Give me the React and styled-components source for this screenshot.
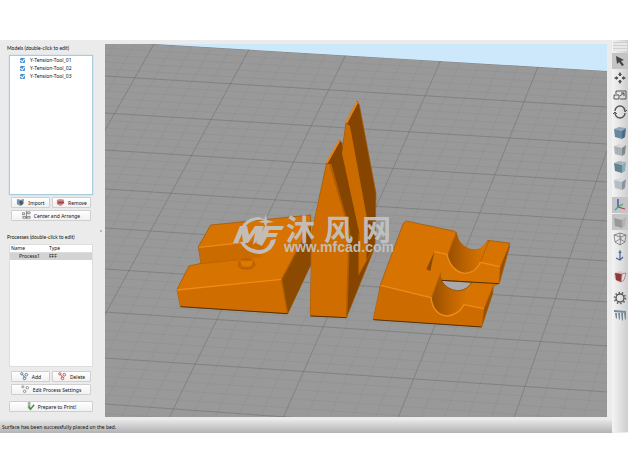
import React from "react";
import styled, { createGlobalStyle } from "styled-components";

const Global = createGlobalStyle`
  * { box-sizing: border-box; }
  body { margin: 0; background: #fff; color: #111; font: 5px/8px "Noto Sans", "Open Sans", sans-serif; }
`;

const Page = styled.main`padding: 40px 0 39px;`;
const Window = styled.div`
  display: grid;
  grid-template-columns: 105px minmax(0, 1fr) 21px;
  grid-template-rows: auto 13px;
  background: #ebebeb;
`;
const Sidebar = styled.aside`
  display: flex;
  flex-direction: column;
  padding: 4px 12px 8px 9px;
  position: relative;
  &::after {
    content: "";
    position: absolute;
    right: 3px;
    top: 190px;
    width: 2px;
    height: 2px;
    border-radius: 50%;
    background: #aaa;
  }
`;
const Heading = styled.h2`
  margin: 0 0 ${(p) => p.$gap}px -2px;
  font: 5px/8px Lato, "Liberation Sans", sans-serif;
  color: #111;
  white-space: nowrap;
`;
const Group = styled.section`
  display: flex;
  flex-direction: column;
  margin-bottom: ${(p) => p.$after}px;
`;
const List = styled.div`
  height: 140px;
  border: 1px solid #a9cbe0;
  background: #fff;
  box-shadow: 0 0 1px #9ec9e4;
`;
const ModelRow = styled.label`
  display: flex;
  align-items: center;
  height: 8px;
  padding-left: 10px;
  gap: 5px;
  line-height: 8px;
`;
const Tick = styled.input`
  appearance: none;
  width: 5px;
  height: 5px;
  margin: 0;
  border-radius: 1px;
  background: #4a90d2;
  display: grid;
  place-items: center;
  &:checked::after {
    content: "";
    width: 2px;
    height: 3px;
    border: solid #fff;
    border-width: 0 1px 1px 0;
    transform: rotate(40deg);
  }
`;
const ButtonGrid = styled.div`
  display: grid;
  grid-template-columns: 1fr 1fr;
  gap: 2px;
  padding: ${(p) => p.$top}px 2px 0;
`;
const Button = styled.button`
  grid-column: ${(p) => (p.$wide ? "1 / -1" : "auto")};
  display: flex;
  align-items: center;
  justify-content: center;
  gap: 3px;
  height: 11px;
  padding: 0;
  border: 1px solid #cfcfcf;
  border-radius: 1px;
  background: linear-gradient(#fff, #f1f1f1);
  color: #111;
  font: inherit;
  white-space: nowrap;
  svg { width: 9px; height: 9px; flex: none; }
`;
const ProcessPane = styled.div`height: 123px; background: #fff; border: 1px solid #ddd;`;
const Table = styled.table`
  width: 100%;
  border-collapse: collapse;
  table-layout: fixed;
  line-height: 7px;
  th, td { padding: 0 0 0 1px; height: 7px; text-align: left; font-weight: 400; }
  th { border-bottom: 1px solid #ddd; }
  th:first-child { width: 38px; }
  tbody tr { background: #d3d3d3; }
  tbody td:first-child { padding-left: 9px; }
`;
const Viewport = styled.section`
  position: relative;
  margin: 4px 0 3px;
  background: #cde8fb;
  overflow: hidden;
`;
const Scene = styled.svg`
  position: absolute;
  inset: 0;
  width: 100%;
  height: 100%;
`;
const Status = styled.footer`
  grid-column: 1 / 3;
  grid-row: 2;
  padding: 0 2px;
  line-height: 14px;
  background: linear-gradient(#e6e6e6, #b2b2b2);
  margin-right: -5px;
`;
const Toolbar = styled.nav`
  grid-column: 3;
  grid-row: 1 / 3;
  position: relative;
  margin: 0 0 1px 5px;
  display: flex;
  flex-direction: column;
  background: linear-gradient(90deg, #f4f4f4, #dcdcdc 65%, #cecece);
`;
const Grip = styled.div`
  height: 9px;
  margin: 2px 1px 2px;
  background: repeating-linear-gradient(#d0d0d0 0 1px, #e8e8e8 1px 3px);
`;
const ToolGroup = styled.div`
  display: flex;
  flex-direction: column;
  gap: 1px;
  padding-bottom: ${(p) => p.$after}px;
`;
const Tool = styled.button`
  display: grid;
  place-items: center;
  height: 16px;
  padding: 0;
  border: 0;
  background: ${(p) => (p.$on ? "#c4c4c6" : "transparent")};
  svg { width: 14px; height: 14px; }
`;

/* Bed grid: x of each main line at the far and near edge, y at the left and right edge */
const COLS = [[57, -160], [154, -58], [252, 49], [351, 169], [448, 283], [547, 398], [644, 514], [740, 629], [836, 743]];
const ROWS = [[41, 71], [76, 107], [113, 144], [150, 182], [189, 221], [228, 261], [269, 302], [312, 346], [358, 392], [404, 440], [452, 490]];
const SUBS = [0, 1, 2, 3, 4];
const subdivide = (lines) =>
  lines.slice(0, -1).flatMap((a, i) =>
    SUBS.map((k) => ({ main: k === 0, a: a[0] + ((lines[i + 1][0] - a[0]) * k) / 5, b: a[1] + ((lines[i + 1][1] - a[1]) * k) / 5 }))
  );

function Bed() {
  const stroke = (m) => ({ stroke: m ? "#686a6c" : "#858789", strokeWidth: m ? 0.6 : 0.5, opacity: m ? 0.8 : 0.5 });
  return (
    <g clipPath="url(#bed)">
      <path d="M105 41 607 71V418H105z" fill="#999" />
      {subdivide(COLS).map((l, i) => <line key={"c" + i} x1={l.a} y1="44" x2={l.b} y2="418" {...stroke(l.main)} />)}
      {subdivide(ROWS).map((l, i) => <line key={"r" + i} x1="105" y1={l.a} x2="607" y2={l.b} {...stroke(l.main)} />)}
    </g>
  );
}

function LeftWedge() {
  return (
    <g transform="translate(165 200) scale(.33333)" strokeLinejoin="round">
      <path d="M36 268 72 198 108 190 100 140 137 75 437 45V195L368 341 46 319z" fill="#d77300" stroke="#9b5300" strokeWidth="2" />
      <path d="M102 142 300 120 290 172 108 192z" fill="#ca6b00" />
      <path d="M350 238 437 75V195L368 341z" fill="#8c4900" />
      <path d="M36 270 350 238 368 341 46 319z" fill="#cf6d00" />
      <path d="M36 270 350 238M102 142 240 127" stroke="#f08a12" strokeWidth="4" fill="none" />
      <path d="M350 238 437 75M350 238l18 103" stroke="#ae5c00" strokeWidth="4" fill="none" />
      <path d="M46 320 368 341" stroke="#523000" strokeWidth="3" />
      <path d="M108 191 220 180" stroke="#b96100" strokeWidth="2" />
      <path d="M222 190q0-14 22-13 24 0 23 11l3 7q-5 12-24 12-23 0-26-10z" fill="#c36700" stroke="#a45500" strokeWidth="2" />
      <path d="M226 180q18 8 38 0l-5 17q-15 6-28 0z" fill="#df7900" />
    </g>
  );
}

function Towers() {
  return (
    <g transform="translate(300 90) scale(.33333)" strokeLinejoin="round">
      <path d="M31 677 35 430 80 218 118 151 126 158 128 170 138 98 172 33 178 45 228 310 225 470 140 682z" fill="#854500" stroke="#a75800" strokeWidth="2" />
      <path d="M138 100 150 108 202 390 199 515 176 554 178 430 126 190z" fill="#ca6b00" />
      <path d="M31 677 35 430 80 222 94 222 148 420 140 682z" fill="#cf6d00" />
      <path d="M90 222 148 420 140 680" stroke="#af5b00" strokeWidth="5" fill="none" />
      <path d="M80 219 118 152M139 99 172 36" stroke="#e58516" strokeWidth="6" />
      <path d="M176 554V430M176 554 222 472" stroke="#ad5b00" strokeWidth="3" fill="none" />
      <path d="M31 678 140 683" stroke="#523000" strokeWidth="3" />
    </g>
  );
}

function Cradle() {
  return (
    <g transform="translate(365 210) scale(.33333)" strokeLinejoin="round">
      <path d="M25 328 47 222 115 40 124 33 270 64 280 94Q305 122 334 120 356 116 368 91L433 99 433 112 403 220 385 227 383 250 350 350z" fill="#d77300" stroke="#9b5300" strokeWidth="2" />
      <path d="M25 328 47 226 198 263 202 290Q215 317 246 318 278 316 297 284L357 296 350 350z" fill="#cc6b00" />
      <path d="M275 67Q284 118 334 120 358 112 368 91 368 125 346 157 333 190 300 190 267 182 248 145 253 110 275 67z" fill="url(#bore)" />
      <path d="M226 192 231 212Q245 242 278 242 303 240 320 219 312 245 297 284 278 317 246 318 208 312 200 267z" fill="url(#bore)" />
      <path d="M229 211 320 217Q306 242 278 242 244 239 229 211z" fill="#aaa" stroke="#754000" strokeWidth="2" />
      <path d="M208 125 196 183 184 178z" fill="#8c4900" />
      <path d="M357 296 383 230V250L350 350z" fill="#9b5100" />
      <path d="M405 172 433 104V112L402 220z" fill="#9b5100" />
      <path d="M47 226 198 263Q204 314 246 318 280 316 297 284L357 296M208 125 246 133Q258 186 300 190 334 188 346 157L405 170" stroke="#ef8b18" strokeWidth="4" fill="none" />
      <path d="M275 67 250 130M228 188 200 261M372 91 347 155" stroke="#b55f00" strokeWidth="3" />
      <path d="M25 329 350 351M230 211 402 221" stroke="#523000" strokeWidth="3" />
    </g>
  );
}

function Watermark() {
  return (
    <g fill="#c3c3c3" opacity=".93">
      <path d="M240 229Q246 217 259 217L267 220Q249 218 244 229zM240 242Q246 254 261 254 274 251 276 239L271 240Q268 250 259 250 248 249 244 242z" />
      <path d="M266 214 267 220 274 222 267 223 266 229 264 223 258 222 264 220z" />
      <path d="M233 243 240 226H247L249 235 255 226H264L260 237 258 240 253 245 255 233 248 243H243L242 234 238 243z" />
      <path d="M265 226H284L282 230H269L268 233H278L276 237H267L262 246 256 243z" />
      <g fontFamily='"Noto Sans CJK SC", sans-serif' fontSize="29" fontWeight="700">
        <text x="286" y="241">沐</text>
        <text x="324" y="241">风</text>
        <text x="362" y="241">网</text>
      </g>
      <text x="284" y="252" fontFamily='"Liberation Sans", Arial, sans-serif' fontSize="14" fontWeight="700">www.mfcad.com</text>
    </g>
  );
}

const cubes = {
  blue: ["#91a9ba", "#6688a0", "#4c6d86"],
  grey: ["#d5d9db", "#a9b0b4", "#7f8a90"],
  teal: ["#a2b6c0", "#638394", "#8baab8"],
  pale: ["#d5dadd", "#b5bdc3", "#8895a0"],
  solid: ["#c4c4c4", "#999", "#b2b2b2"],
};
const Cube = ({ tone }) => {
  const [t, l, r] = cubes[tone];
  return <g><path d="M1 3 6 1 13 2 9 5z" fill={t} /><path d="M1 3 9 5V13L2 11z" fill={l} /><path d="M9 5 13 2 12 11 9 13z" fill={r} /></g>;
};
const ink = { fill: "none", stroke: "#555", strokeWidth: 1 };
const DRAWINGS = {
  pointer: <path d="M3 2 11 6 8 7 11 11 9 12 6 8 4 10z" fill="#444" />,
  move: <g fill="#555"><path d="M7 1 9 4H5zM7 13 5 10H9zM1 7 4 5V9zM13 7 10 9V5z" /><path d="M6 4H8V5H6zM6 9H8V10H6zM4 6H5V8H4zM9 6H10V8H9z" /></g>,
  scale: <g {...ink}><path d="M3 6V3H13V11H7M1 7H6V11H1zM7 8 11 5M8 5H11V8" /></g>,
  rotate: <g {...ink}><path d="M2 6A5 5 0 0 1 12 6M12 8A5 5 0 0 1 2 8" strokeWidth="1.4" /><path d="M11 4 12 7 14 5M0 9 2 7 4 9" /></g>,
  axes: <g fill="none" strokeWidth="1.3"><path d="M5 9V1" stroke="#3447ae" /><path d="M5 9 12 11" stroke="#b54238" /><path d="M5 9 10 6" stroke="#45a66a" /><path d="M5 9 2 12" stroke="#3aa4a4" /></g>,
  wire: <g {...ink} stroke="#777" strokeWidth=".8"><path d="M1 3 7 1 13 3 12 10 7 13 2 10zM1 3 8 5 13 3M8 5 7 13M2 10 7 7 12 10M7 1V7" /></g>,
  normal: <g fill="none" stroke="#4c63a0" strokeWidth="1.2"><path d="M7 11V2M6 4 7 2 8 4M3 9 7 11 10 8" /></g>,
  section: <g><path d="M1 3 7 1 13 3 11 11 7 13 2 10z" fill="#d9c9c9" /><path d="M2 3 9 4 8 12 3 10z" fill="#8f3a3a" /><path d="M9 4 13 3 11 10 8 12z" fill="#ddd" stroke="#9c5c5c" strokeWidth=".6" /></g>,
  gear: <g fill="none" stroke="#555"><circle cx="7" cy="7" r="4" strokeWidth="1.4" /><circle cx="7" cy="7" r="5.5" strokeWidth="1.5" strokeDasharray="1.4 2" /></g>,
  supports: <g fill="#738b9c"><path d="M1 2 13 3V5L1 4z" /><path d="M2 5H4V10L3 11zM5 5H7V11L6 12zM8 5H10V12L9 13zM11 5H13V11L12 12z" /></g>,
};

function ToolIcon({ name }) {
  return <svg viewBox="0 0 14 14" aria-hidden="true">{DRAWINGS[name] || <Cube tone={name} />}</svg>;
}

const TOOL_GROUPS = [
  { after: 5, tools: [["Select", "pointer", true], ["Move", "move"], ["Scale", "scale"], ["Rotate", "rotate"]] },
  { after: 5, tools: [["Default view", "blue"], ["Top view", "grey"], ["Front view", "teal"], ["Side view", "pale"]] },
  { after: 5, tools: [["Axes", "axes", true], ["Solid", "solid", true], ["Wireframe", "wire"], ["Normals", "normal"]] },
  { after: 5, tools: [["Cross section", "section"]] },
  { after: 0, tools: [["Machine control", "gear"], ["Supports", "supports"]] },
];

const SMALL = {
  import: <g><path d="M1 1 5 2 9 1 8 7 5 9 1 7z" fill="#8795a2" /><path d="M4 3H7V5H9L6 8 3 5H4z" fill="#405a76" /></g>,
  remove: <g><path d="M1 2 5 1 9 2 8 7 5 9 1 7z" fill="#c58a8a" /><path d="M2 4H9V6H2z" fill="#a73b43" /></g>,
  arrange: <g fill="none" stroke="#666" strokeWidth=".8"><path d="M0 2H3V4H0zM6 1H9V3H6zM1 6H4V8H1zM6 6H9V8H6zM5 0V9" /></g>,
  add: <g fill="none" stroke="#54718e"><circle cx="2" cy="2" r="1.3" /><circle cx="7" cy="3" r="1.5" /><circle cx="5" cy="7" r="1.5" /><path d="M3 3 5 6" /></g>,
  delete: <g fill="none" stroke="#b64c50"><circle cx="2" cy="2" r="1.3" /><circle cx="7" cy="3" r="1.5" /><circle cx="5" cy="7" r="1.5" /><path d="M3 3 5 6" /></g>,
  edit: <g fill="none" stroke="#888"><circle cx="2" cy="2" r="1.2" /><circle cx="7" cy="3" r="1.4" /><circle cx="4" cy="7" r="1.4" /></g>,
  print: <g><path d="M2 0H5V9L2 7z" fill="#a5b5a2" /><path d="M3 5 5 8 9 3" fill="none" stroke="#45913f" strokeWidth="1.6" /></g>,
};
const Action = ({ icon, wide, children }) => (
  <Button type="button" $wide={wide}>
    <svg viewBox="0 0 10 10" aria-hidden="true">{SMALL[icon]}</svg>
    {children}
  </Button>
);

export default function App() {
  return (
    <Page>
      <Global />
      <Window>
        <Sidebar>
          <Group $after={12}>
            <Heading $gap={3}>Models (double-click to edit)</Heading>
            <List>
              {["Y-Tension-Tool_01", "Y-Tension-Tool_02", "Y-Tension-Tool_03"].map((name) => (
                <ModelRow key={name}><Tick type="checkbox" defaultChecked />{name}</ModelRow>
              ))}
            </List>
            <ButtonGrid $top={2}>
              <Action icon="import">Import</Action>
              <Action icon="remove">Remove</Action>
              <Action icon="arrange" wide>Center and Arrange</Action>
            </ButtonGrid>
          </Group>
          <Group $after={6}>
            <Heading $gap={3}>Processes (double-click to edit)</Heading>
            <ProcessPane>
              <Table>
                <thead><tr><th scope="col">Name</th><th scope="col">Type</th></tr></thead>
                <tbody><tr><td>Process1</td><td>FFF</td></tr></tbody>
              </Table>
            </ProcessPane>
            <ButtonGrid $top={4}>
              <Action icon="add">Add</Action>
              <Action icon="delete">Delete</Action>
              <Action icon="edit" wide>Edit Process Settings</Action>
            </ButtonGrid>
          </Group>
          <Action icon="print">Prepare to Print!</Action>
        </Sidebar>
        <Viewport aria-label="Print bed">
          <Scene viewBox="105 44 502 373" preserveAspectRatio="xMidYMid slice">
            <defs>
              <clipPath id="bed"><path d="M105 41 607 71V418H105z" /></clipPath>
              <linearGradient id="bore"><stop offset="0" stopColor="#964f00" /><stop offset=".5" stopColor="#c06500" /><stop offset="1" stopColor="#dc7900" /></linearGradient>
            </defs>
            <Bed />
            <LeftWedge />
            <Towers />
            <Cradle />
            <Watermark />
          </Scene>
        </Viewport>
        <Status>Surface has been successfully placed on the bed.</Status>
        <Toolbar aria-label="Tools">
          <Grip />
          {TOOL_GROUPS.map((g) => (
            <ToolGroup key={g.tools[0][0]} $after={g.after}>
              {g.tools.map(([label, icon, on]) => (
                <Tool key={label} type="button" aria-label={label} $on={on}><ToolIcon name={icon} /></Tool>
              ))}
            </ToolGroup>
          ))}
        </Toolbar>
      </Window>
    </Page>
  );
}
